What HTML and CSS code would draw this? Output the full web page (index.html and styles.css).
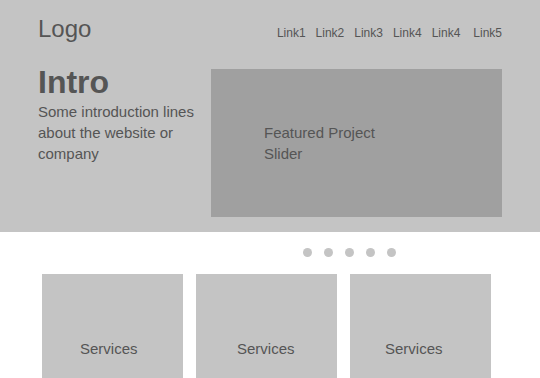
FILE: index.html
```html
<!DOCTYPE HTML>
<html lang="en">
<head>
	<title>Wireframe</title>
	<meta charset="utf-8">
	<link rel="stylesheet" href="styles.css">
</head>
<body>
	<div class="top">
		<div class="bar">
			<div class="logo">Logo</div>
			<div class="nav">
				<a href="#">Link1</a>
				<a href="#">Link2</a>
				<a href="#">Link3</a>
				<a href="#">Link4</a>
				<a href="#">Link4</a>
				<a href="#" class="last">Link5</a>
			</div>
		</div>

		<div class="hero">
			<div class="intro">
				<h1>Intro</h1>
				<p>Some introduction lines about the website or company</p>
			</div>
			<div class="slider">
				<p>Featured Project<br>Slider</p>
			</div>
		</div>
	</div>

	<div class="dots">
		<span class="dot"></span>
		<span class="dot"></span>
		<span class="dot"></span>
		<span class="dot"></span>
		<span class="dot"></span>
	</div>

	<div class="services">
		<div class="card one">Services</div>
		<div class="card two">Services</div>
		<div class="card three">Services</div>
	</div>
</body>
</html>
```

FILE: styles.css
```css
html {
	height: 100%;
}

body {
	margin: 0;
	padding: 0;
	background: #ffffff;
	color: #555555;
	font-family: "Liberation Sans", Arial, sans-serif;
	font-size: 15px;
	line-height: 21px;
	overflow: hidden;
}

.top {
	background-color: #c4c4c4;
	height: 232px;
	box-sizing: border-box;
	padding: 15px 38px 0 38px;
}

.bar {
	display: flex;
	justify-content: space-between;
	align-items: baseline;
	height: 28px;
}

.logo {
	font-size: 24px;
	line-height: 28px;
}

.nav {
	display: flex;
	gap: 10px;
	font-size: 12px;
}

.nav a {
	color: #555555;
	text-decoration: none;
}

.nav a.last {
	margin-left: 3px;
}

.hero {
	display: flex;
	align-items: flex-start;
	margin-top: 20px;
}

.intro {
	flex: 0 0 173px;
}

.intro h1 {
	margin: 0;
	font-size: 32px;
	line-height: 38px;
	font-weight: bold;
}

.intro p {
	margin: 0;
	width: 165px;
}

.slider {
	flex: 0 0 291px;
	height: 148px;
	margin-top: 6px;
	background-color: #a0a0a0;
	box-sizing: border-box;
	padding: 53px 0 0 53px;
}

.slider p {
	margin: 0;
}

.dots {
	display: flex;
	gap: 12px;
	padding-left: 303px;
	margin-top: 16px;
	height: 26px;
}

.dot {
	width: 9px;
	height: 9px;
	border-radius: 50%;
	background-color: #c4c4c4;
}

.services {
	display: flex;
	gap: 13px;
	padding-left: 42px;
}

.card {
	width: 141px;
	height: 104px;
	background-color: #c4c4c4;
	box-sizing: border-box;
	padding-top: 64px;
}

.card.one {
	padding-left: 38px;
}

.card.two {
	padding-left: 41px;
}

.card.three {
	padding-left: 35px;
}
```
